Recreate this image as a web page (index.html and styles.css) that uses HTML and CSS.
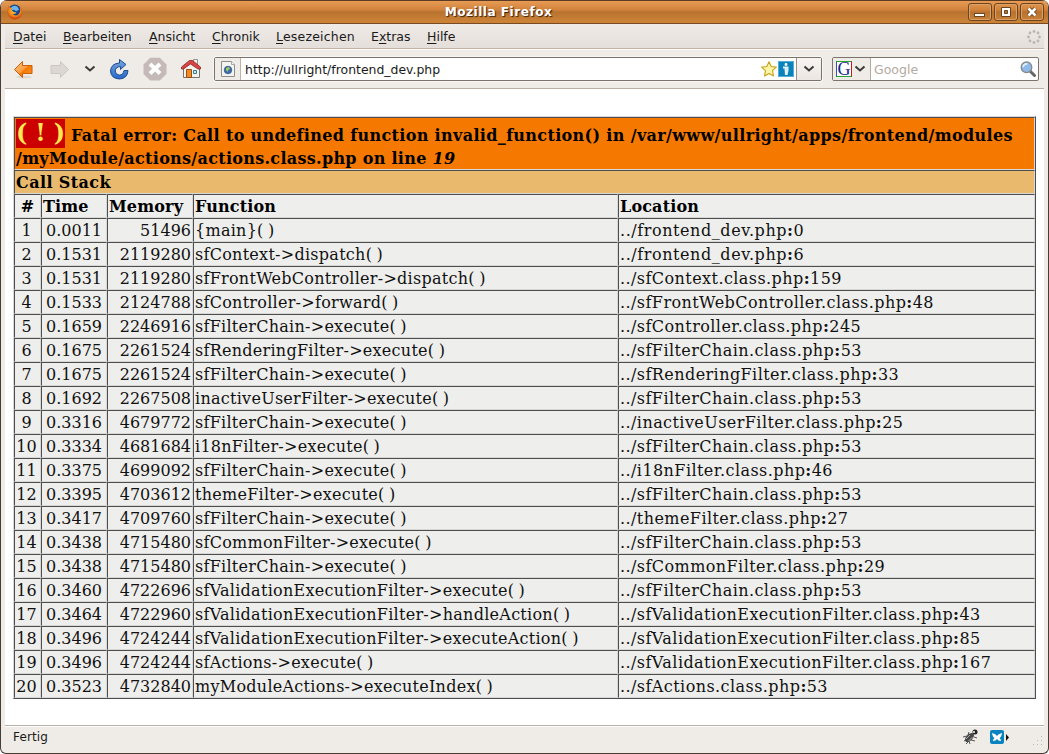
FILE: index.html
```
<!DOCTYPE html>
<html lang="de">
<head>
<meta charset="utf-8">
<title>Mozilla Firefox</title>
<link rel="stylesheet" href="styles.css">
</head>
<body>
<div class="window">
<header class="titlebar">
<svg class="fox" width="16" height="16" viewBox="0 0 16 16"><defs><radialGradient id="fx" cx=".5" cy=".35" r=".65"><stop offset="0" stop-color="#ffd83c"/><stop offset=".6" stop-color="#f28a18"/><stop offset="1" stop-color="#c93512"/></radialGradient></defs><circle cx="8" cy="8.2" r="7.3" fill="#d8501a"/><circle cx="7.6" cy="6.600" r="6" fill="#17478f"/><path d="M4 3.500q3-3 6.500-.8l1.500 3-3 1.500-2-1.500-2 .5z" fill="#6db5e8"/><path d="M.7 4Q0 13 6 15.200q7 1 9-5.700Q15.500 5 12.500 2.300q2 5-1 8.200-3 2-6-.5 3 .3 4-1.500Q6 8.500 5 6.500 4 5 5 4 2.500 4 2 2z" fill="url(#fx)"/></svg>
<h1 class="title">Mozilla Firefox</h1>
<div class="winbtns">
<span class="wb"><svg width="22" height="16"><rect x="5.500" y="9.500" width="10" height="3" fill="#fff" stroke="#6b4420"/></svg></span>
<span class="wb"><svg width="22" height="16"><path d="M6.500 3.500h9v9h-9zM9.500 6.500h3v3h-3z" fill="#fff" fill-rule="evenodd" stroke="#6b4420"/></svg></span>
<span class="wb"><svg width="22" height="16"><path d="M7.500 4.500l7 7M14.500 4.500l-7 7" stroke="#6b4420" stroke-width="4.500"/><path d="M7.500 4.500l7 7M14.500 4.500l-7 7" stroke="#fff" stroke-width="2.600"/></svg></span>
</div>
</header>
<nav class="menubar">
<span class="mi m1"><u>D</u>atei</span><span class="mi m2"><u>B</u>earbeiten</span><span class="mi m3"><u>A</u>nsicht</span><span class="mi m4"><u>C</u>hronik</span><span class="mi m5"><u>L</u>esezeichen</span><span class="mi m6">E<u>x</u>tras</span><span class="mi m7"><u>H</u>ilfe</span>
<svg class="throbber" width="14" height="14" viewBox="0 0 14 14" fill="#bcb6b1"><circle cx="7" cy="1.500" r="1.400"/><circle cx="11" cy="3" r="1.400"/><circle cx="12.500" cy="7" r="1.400"/><circle cx="11" cy="11" r="1.400"/><circle cx="7" cy="12.500" r="1.400"/><circle cx="3" cy="11" r="1.400"/><circle cx="1.500" cy="7" r="1.400"/><circle cx="3" cy="3" r="1.400"/></svg>
</nav>
<div class="toolbar">
<svg class="navicons" width="208" height="38" viewBox="0 50 208 38">
<defs><linearGradient id="or" x1="0" y1="0" x2="1" y2="1"><stop offset="0" stop-color="#ffc48b"/><stop offset=".5" stop-color="#fb9d43"/><stop offset=".55" stop-color="#f57900"/><stop offset="1" stop-color="#fb9433"/></linearGradient><linearGradient id="bl" x1="0" y1="0" x2="0" y2="1"><stop offset="0" stop-color="#7aa6dc"/><stop offset="1" stop-color="#2669c9"/></linearGradient></defs>
<ellipse cx="24" cy="77" rx="8" ry="1.500" fill="#ddd8d2"/>
<path d="M14.500 69.500l8-8v4h9.500v8h-9.500v4z" fill="url(#or)" stroke="#c4610a"/>
<path d="M68.500 69.500l-8-8v4h-9.500v8h9.500v4z" fill="#dbd7d2" stroke="#cbc6c1"/>
<path d="M85.500 66.500l4.500 4 4.500-4" fill="none" stroke="#3c3936" stroke-width="2"/>
<path d="M119.500 59.500l6.500 5-5.500 5v-3q-5 .5-5.300 4.500.3 4 4.300 4.100 3.500 0 4.500-4.600h4q-.5 8-8.500 8.500-8.700-.5-9-8 .5-7.500 9-8z" fill="url(#bl)" stroke="#1d4c94"/>
<path d="M150.200 57.700h9.600l6.700 6.700v9.600l-6.700 6.500h-9.600l-6.700-6.500v-9.600z" fill="#c5bab7"/><path d="M150 64l10 9.500M160 64l-10 9.500" stroke="#fff" stroke-width="4"/>
<path d="M193.500 59.500h4v7h-4z" fill="#f4f3f0" stroke="#96918b"/><path d="M183.500 67.500l7.500-5 8.500 5v10h-16z" fill="#f4f2ef" stroke="#77736e"/><path d="M186.500 69.500h5v8h-5z" fill="#f18b22" stroke="#9c4d12"/><path d="M193.500 70.500h3v3h-3z" fill="#b8efff" stroke="#377b8e"/><path d="M181.500 67l8-6.500h3l8 6.500v2h-2.500l-7.500-5-7 5h-2z" fill="#d84343" stroke="#8c2525" stroke-width=".8"/>
</svg>
<div class="urlbar">
<span class="siteid"><svg width="16" height="16" viewBox="0 0 16 16"><path d="M1.500.5h10l3 3v12h-13z" fill="#f3f3f2" stroke="#8c8d89"/><path d="M11.500.5v3h3" fill="#fff" stroke="#aaa"/><circle cx="8" cy="9" r="3.800" fill="#3c6caa" stroke="#31558b" stroke-width=".7"/><path d="M6 7l3-1 1 2-2 1v2l-2-2z" fill="#a3cc5c"/></svg></span>
<span class="url">http://ullright/frontend_dev.php</span>
<svg class="star" width="16" height="16" viewBox="0 0 16 16"><path d="M8 .8l2.200 4.700 5.100.6-3.800 3.600 1 5.200L8 12.400l-4.500 2.500 1-5.200L.7 6.100l5.100-.6z" fill="#fdf5a5" stroke="#c6a418" stroke-width="1.100" stroke-linejoin="round"/></svg>
<svg width="16" height="16" viewBox="0 0 16 16"><rect x=".5" y=".5" width="15" height="15" fill="#0a83bd" stroke="#57acd2"/><circle cx="8" cy="3.500" r="1.400" fill="#fff"/><path d="M5 5.500h5.500v4L9.500 14H7L6.500 7.500H5z" fill="#e1eff6"/></svg>
<span class="drop"><svg width="12" height="8"><path d="M1.500 1.500l4.500 4 4.500-4" fill="none" stroke="#3c3936" stroke-width="2"/></svg></span>
</div>
<div class="search">
<span class="engine"><span class="glogo">G</span><svg width="12" height="8"><path d="M1.500 1.500l4.500 4 4.500-4" fill="none" stroke="#3c3936" stroke-width="2"/></svg></span>
<span class="hint">Google</span>
<svg class="lens" width="17" height="17" viewBox="0 0 17 17"><path d="M10 10l4.500 4.500" stroke="#666" stroke-width="3" stroke-linecap="round"/><circle cx="6.500" cy="6.300" r="5.300" fill="#8fb9e8" stroke="#858a8d" stroke-width="1.300"/><path d="M3 6q1-3.500 4.500-3" fill="none" stroke="#e0f0ff" stroke-width="1.700"/></svg>
</div>
</div>
<main class="page">
<table class="trace" cellspacing="0">
<colgroup><col class="c1"><col class="c2"><col class="c3"><col class="c4"><col class="c5"></colgroup>
<tr class="fatal"><th colspan="5"><div class="line1"><span class="bang">( ! )</span> Fatal error: Call to undefined function invalid_function() in /var/www/ullright/apps/frontend/modules</div><div class="line2">/myModule/actions/actions.class.php on line <i>19</i></div></th></tr>
<tr class="stack"><th colspan="5">Call Stack</th></tr>
<tr class="heads"><th class="n">#</th><th>Time</th><th>Memory</th><th>Function</th><th>Location</th></tr>
<tr class="entry"><td>1</td><td>0.0011</td><td>51496</td><td>{main}( )</td><td>../frontend_dev.php<b>:</b>0</td></tr>
<tr class="entry"><td>2</td><td>0.1531</td><td>2119280</td><td>sfContext-&gt;dispatch( )</td><td>../frontend_dev.php<b>:</b>6</td></tr>
<tr><td>3</td><td>0.1531</td><td>2119280</td><td>sfFrontWebController-&gt;dispatch( )</td><td>../sfContext.class.php<b>:</b>159</td></tr>
<tr><td>4</td><td>0.1533</td><td>2124788</td><td>sfController-&gt;forward( )</td><td>../sfFrontWebController.class.php<b>:</b>48</td></tr>
<tr><td>5</td><td>0.1659</td><td>2246916</td><td>sfFilterChain-&gt;execute( )</td><td>../sfController.class.php<b>:</b>245</td></tr>
<tr><td>6</td><td>0.1675</td><td>2261524</td><td>sfRenderingFilter-&gt;execute( )</td><td>../sfFilterChain.class.php<b>:</b>53</td></tr>
<tr><td>7</td><td>0.1675</td><td>2261524</td><td>sfFilterChain-&gt;execute( )</td><td>../sfRenderingFilter.class.php<b>:</b>33</td></tr>
<tr><td>8</td><td>0.1692</td><td>2267508</td><td>inactiveUserFilter-&gt;execute( )</td><td>../sfFilterChain.class.php<b>:</b>53</td></tr>
<tr><td>9</td><td>0.3316</td><td>4679772</td><td>sfFilterChain-&gt;execute( )</td><td>../inactiveUserFilter.class.php<b>:</b>25</td></tr>
<tr><td>10</td><td>0.3334</td><td>4681684</td><td>i18nFilter-&gt;execute( )</td><td>../sfFilterChain.class.php<b>:</b>53</td></tr>
<tr><td>11</td><td>0.3375</td><td>4699092</td><td>sfFilterChain-&gt;execute( )</td><td>../i18nFilter.class.php<b>:</b>46</td></tr>
<tr><td>12</td><td>0.3395</td><td>4703612</td><td>themeFilter-&gt;execute( )</td><td>../sfFilterChain.class.php<b>:</b>53</td></tr>
<tr><td>13</td><td>0.3417</td><td>4709760</td><td>sfFilterChain-&gt;execute( )</td><td>../themeFilter.class.php<b>:</b>27</td></tr>
<tr><td>14</td><td>0.3438</td><td>4715480</td><td>sfCommonFilter-&gt;execute( )</td><td>../sfFilterChain.class.php<b>:</b>53</td></tr>
<tr><td>15</td><td>0.3438</td><td>4715480</td><td>sfFilterChain-&gt;execute( )</td><td>../sfCommonFilter.class.php<b>:</b>29</td></tr>
<tr><td>16</td><td>0.3460</td><td>4722696</td><td>sfValidationExecutionFilter-&gt;execute( )</td><td>../sfFilterChain.class.php<b>:</b>53</td></tr>
<tr><td>17</td><td>0.3464</td><td>4722960</td><td>sfValidationExecutionFilter-&gt;handleAction( )</td><td>../sfValidationExecutionFilter.class.php<b>:</b>43</td></tr>
<tr><td>18</td><td>0.3496</td><td>4724244</td><td>sfValidationExecutionFilter-&gt;executeAction( )</td><td>../sfValidationExecutionFilter.class.php<b>:</b>85</td></tr>
<tr><td>19</td><td>0.3496</td><td>4724244</td><td>sfActions-&gt;execute( )</td><td>../sfValidationExecutionFilter.class.php<b>:</b>167</td></tr>
<tr><td>20</td><td>0.3523</td><td>4732840</td><td>myModuleActions-&gt;executeIndex( )</td><td>../sfActions.class.php<b>:</b>53</td></tr>
</table>
</main>
<footer class="status">
<span class="done">Fertig</span>
<svg width="82" height="26" viewBox="962 726 82 26"><path d="M963 737l4-1m-3 5l4-2m-2 5l3-3m0-9l-1 3m5-4l1 3m3 4l-3-1m1 4l-4-1m-1 4l-1-3" stroke="#555" fill="none"/><ellipse cx="969.500" cy="737.500" rx="5.500" ry="3.200" transform="rotate(-45 969.500 737.500)" fill="#454545"/><path d="M966 739l4-4M968.500 741l4-4" stroke="#aaa"/><circle cx="975" cy="732" r="2.500" fill="#222"/><circle cx="974" cy="732" r="1" fill="#fff"/>
<rect x="990" y="730" width="14" height="14" rx="2" fill="#0a84c1"/><path d="M992 733q4 1 5 3 1-2 5-3-.5 4-2.500 5 1.500 1 1.500 3-3 0-4-2-1 2-4 2 0-2 1.500-3-2-1-2.500-5z" fill="#fff"/>
<path d="M1006 734l3 3.500-3 3.500z" fill="#111"/>
<path d="M1041 736h1v1h-1zM1037 740h1v1h-1zM1041 740h1v1h-1zM1033 744h1v1h-1zM1037 744h1v1h-1zM1041 744h1v1h-1z" fill="#bdb8b2"/></svg>
</footer>
</div>
</body>
</html>
```
FILE: styles.css
```
* { box-sizing: border-box; }
body { margin: 0; background: #fff; font-family: "DejaVu Sans", sans-serif; font-size: 12px; color: #1a1a1a; }
.window { width: 1049px; height: 754px; display: flex; flex-direction: column; background: #efebe7; border: 1px solid #493b35; border-top: 0; border-radius: 7px 7px 6px 6px; overflow: hidden; }
.titlebar { height: 24px; flex: none; display: flex; align-items: center; padding: 0 4px 0 6px; background: linear-gradient(#e89b54, #d1833c 40%, #b8722f 50%, #cb8237 90%); border-top: 1px solid #5b3b24; border-bottom: 1px solid #784b23; }
.title { flex: 1; margin: 0 0 0 6px; text-align: center; font-size: 12.1px; letter-spacing: .5px; line-height: 22px; color: #fff; text-shadow: 1px 1px 1px #34210f; }
.winbtns { display: flex; gap: 2px; }
.wb { width: 24px; height: 18px; border: 1px solid #6b4420; border-radius: 3px; box-shadow: inset 0 0 0 1px #dba065; display: flex; align-items: center; justify-content: center; }
.menubar { height: 25px; flex: none; margin: 0 4px; display: flex; align-items: center; background: linear-gradient(#efebe7, #e4dfda); border-bottom: 1px solid #c4b1a3; padding: 1px 0 0 8px; font-size: 12.5px; }
.mi { line-height: 16px; white-space: nowrap; }
.mi u { text-underline-offset: 2px; text-decoration-thickness: 1px; }
.m1 { width: 50px; } .m2 { width: 86px; } .m3 { width: 63px; } .m4 { width: 64px; } .m5 { width: 95px; letter-spacing: .2px; } .m6 { width: 56px; }
.throbber { margin: 0 3px 0 auto; }
.toolbar { height: 40px; flex: none; margin: 0 4px; display: flex; align-items: center; border-top: 1px solid #fff; border-bottom: 1px solid #bdaea4; }
.navicons { flex: none; width: 208px; margin-left: -5px; }
.urlbar { width: 608px; height: 24px; margin-left: 6px; display: flex; align-items: center; background: #fff; border: 1px solid #7c736b; border-radius: 2px; box-shadow: 0 0 0 1px #f8f6f4; flex: none; }
.siteid { width: 26px; height: 22px; display: flex; align-items: center; justify-content: center; background: #efebe7; border-right: 1px solid #c4b1a3; }
.url { flex: 1; padding: 1px 0 0 4px; font-size: 12.45px; white-space: nowrap; }
.star { margin-right: 1px; }
.drop { width: 25px; height: 22px; margin-left: 2px; display: flex; align-items: center; justify-content: center; border-left: 1px solid #9b9189; background: linear-gradient(#f7f4f2, #ebe6e1); }
.search { width: 207px; height: 24px; margin-left: 10px; display: flex; align-items: center; background: #fff; border: 1px solid #7c736b; border-radius: 2px; flex: none; }
.engine { width: 38px; height: 22px; display: flex; align-items: center; gap: 2px; padding-left: 3px; background: #efebe7; border-right: 1px solid #b5aaa0; }
.glogo { width: 16px; height: 16px; border: 1px solid; border-color: #2aa72a #d01515 #2aa72a #2a55c8; background: #fff; color: #17268e; font: 18px/14px "Liberation Serif", serif; text-align: center; }
.hint { flex: 1; padding: 1px 0 0 3px; font-size: 12.5px; color: #b4aaa0; }
.lens { margin-right: 1px; }
.page { flex: 1; margin: 0 4px; background: #fff; padding: 27px 0 0 8px; min-height: 0; overflow: hidden; }
.trace { width: 1023px; height: 583px; table-layout: fixed; border: 1px solid; border-color: #d8d8d8 #4d4d4d #4d4d4d #d8d8d8; border-spacing: 0; font: 16px/19px "DejaVu Serif", serif; color: #111; }
.c1 { width: 27px; } .c2 { width: 66px; } .c3 { width: 86px; } .c4 { width: 425px; } .c5 { width: 417px; }
.trace td, .trace th { height: 24px; padding: 1px; border: 1px solid; border-color: #4d4d4d #d8d8d8 #d8d8d8 #4d4d4d; background: #eeeeec; text-align: left; white-space: nowrap; overflow: hidden; }
.trace th { color: #000; letter-spacing: .15px; }
.trace td:first-child, .trace td:nth-child(2), .trace .n { text-align: center; }
.trace td:first-child { padding-right: 3px; }
.trace td:nth-child(3) { text-align: right; }
.trace td:nth-child(4) { letter-spacing: .27px; word-spacing: -1px; }
.trace td:nth-child(5) { letter-spacing: .43px; }
.trace .entry td:nth-child(5) { letter-spacing: .57px; }
.trace .fatal th { height: 53px; background: #f57900; vertical-align: top; padding: 1px 1px 0; letter-spacing: .35px; }
.line1 { height: 29px; line-height: 31px; }
.line2 { height: 20px; line-height: 22px; letter-spacing: .3px; }
.trace .stack th { background: #e9b96e; letter-spacing: .4px; }
.bang { display: inline-block; height: 29px; line-height: 28px; background: #c00; color: #fce94f; font-size: 24px; letter-spacing: -.2px; }
.status { height: 28px; flex: none; margin: 0 4px; display: flex; align-items: center; justify-content: space-between; border-top: 1px solid #b8b0a8; box-shadow: inset 0 1px #fff; }
.done { padding: 0 0 6px 8px; line-height: 16px; letter-spacing: .15px; }
.status svg { flex: none; margin-bottom: 2px; }
```
